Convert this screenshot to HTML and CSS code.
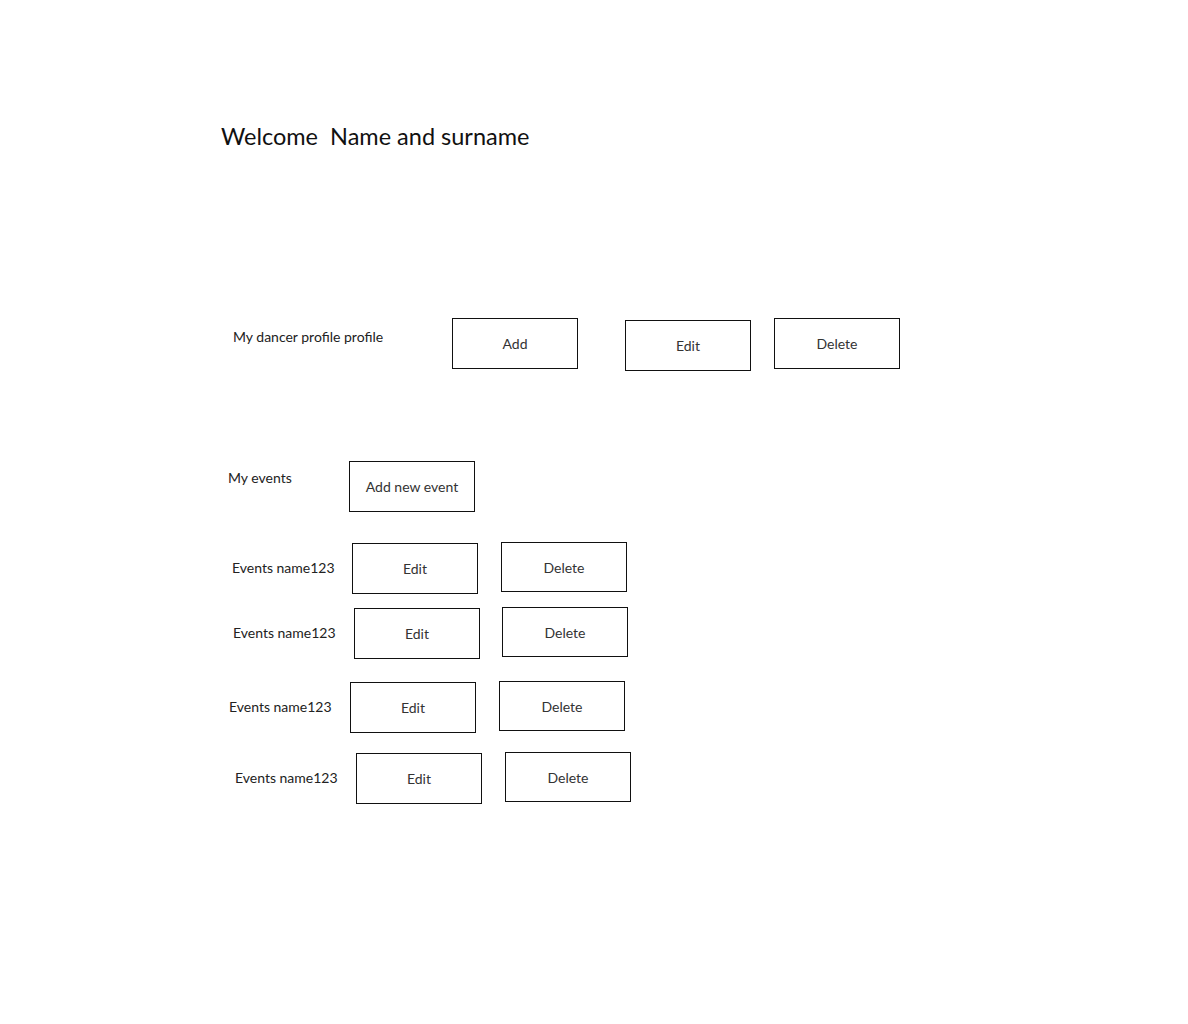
FILE: index.html
```html
<!DOCTYPE html>
<html lang="en">
<head>
<meta charset="utf-8">
<title>Dashboard</title>
<link rel="stylesheet" href="styles.css">
</head>
<body>
<main class="page">
  <h1 class="title">Welcome&nbsp; Name and surname</h1>

  <section class="row row-profile">
    <div class="label lbl-profile">My dancer profile profile</div>
    <div class="btn">Add</div>
    <div class="btn btn-edit-profile">Edit</div>
    <div class="btn btn-del-profile">Delete</div>
  </section>

  <section class="row row-events">
    <div class="label lbl-events">My events</div>
    <div class="btn">Add new event</div>
  </section>

  <section class="row row-e1">
    <div class="label ev lbl-e1">Events name123</div>
    <div class="btn btn-edit">Edit</div>
    <div class="btn btn-del">Delete</div>
  </section>

  <section class="row row-e2">
    <div class="label ev lbl-e2">Events name123</div>
    <div class="btn btn-edit">Edit</div>
    <div class="btn btn-del btn-del-e2">Delete</div>
  </section>

  <section class="row row-e3">
    <div class="label ev lbl-e3">Events name123</div>
    <div class="btn btn-edit">Edit</div>
    <div class="btn btn-del">Delete</div>
  </section>

  <section class="row row-e4">
    <div class="label ev lbl-e4">Events name123</div>
    <div class="btn btn-edit">Edit</div>
    <div class="btn btn-del">Delete</div>
  </section>
</main>
</body>
</html>
```

FILE: styles.css
```css
html, body {
  margin: 0;
  padding: 0;
  background: #ffffff;
}

body {
  font-family: Lato, "Noto Sans", "Liberation Sans", sans-serif;
  color: #222;
}

.page {
  width: 1188px;
  padding-top: 121px;
}

.title {
  margin: 0 0 0 221px;
  font-size: 23.5px;
  line-height: 30px;
  font-weight: 400;
  color: #111;
}

.row {
  display: flex;
  align-items: flex-start;
  height: 52px;
}

.row-profile { margin-top: 167px; }
.row-events { margin-top: 91px; }
.row-e1 { margin-top: 29px; }
.row-e2 { margin-top: 13px; }
.row-e3 { margin-top: 22px; }
.row-e4 { margin-top: 19px; }

.label {
  font-size: 14px;
  line-height: 20px;
  color: #222;
  white-space: nowrap;
  flex: none;
}

.lbl-profile { margin: 9px 0 0 233px; width: 219px; }
.lbl-events  { margin: 7px 0 0 228px; width: 121px; }
.ev { margin-top: 16px; }
.lbl-e1 { margin-left: 232px; width: 120px; }
.lbl-e2 { margin-left: 233px; width: 121px; }
.lbl-e3 { margin-left: 229px; width: 121px; }
.lbl-e4 { margin-left: 235px; width: 121px; }

.btn {
  flex: none;
  box-sizing: border-box;
  width: 126px;
  height: 51px;
  border: 1px solid #111;
  display: flex;
  align-items: center;
  justify-content: center;
  font-size: 14px;
  color: #333;
}

.btn-edit-profile { margin: 2px 0 0 47px; }
.btn-del-profile { margin-left: 23px; }

.btn-edit { margin-top: 1px; }
.btn-del { margin-left: 23px; height: 50px; }
.btn-del-e2 { margin-left: 22px; }
```
